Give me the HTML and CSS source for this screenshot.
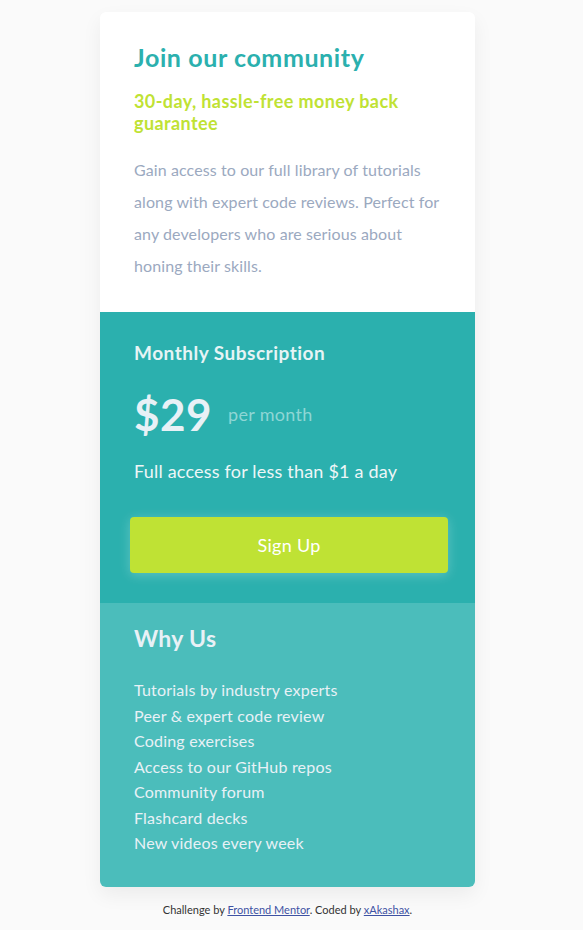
FILE: index.html
```html
<!DOCTYPE html>
<html lang="en">
<head>
<meta charset="utf-8">
<title>Single price grid</title>
<link rel="stylesheet" href="styles.css">
</head>
<body>
<div class="page">
  <main class="card">
    <section class="intro">
      <h1 class="intro-title">Join our community</h1>
      <h2 class="intro-sub">30-day, hassle-free money back guarantee</h2>
      <p class="intro-text">Gain access to our full library of tutorials along with expert code reviews. Perfect for any developers who are serious about honing their skills.</p>
    </section>
    <section class="sub">
      <h2 class="sub-title">Monthly Subscription</h2>
      <div class="price"><span class="amount">$29</span><span class="per">per month</span></div>
      <p class="sub-text">Full access for less than $1 a day</p>
      <button class="btn">Sign Up</button>
    </section>
    <section class="why">
      <h2 class="why-title">Why Us</h2>
      <ul class="why-list">
        <li>Tutorials by industry experts</li>
        <li>Peer &amp; expert code review</li>
        <li>Coding exercises</li>
        <li>Access to our GitHub repos</li>
        <li>Community forum</li>
        <li>Flashcard decks</li>
        <li>New videos every week</li>
      </ul>
    </section>
  </main>
  <footer class="attribution">Challenge by <a href="#">Frontend Mentor</a>. Coded by <a href="#">xAkashax</a>.</footer>
</div>
</body>
</html>
```
FILE: styles.css
```css
html, body { margin: 0; padding: 0; background: #fafafa; }
body { font-family: Lato, "Open Sans", sans-serif; }
.page { width: 575px; padding-top: 12px; display: flex; flex-direction: column; align-items: center; }
.card { width: 375px; border-radius: 6px; overflow: hidden; background: #fff; box-shadow: 0 8px 20px rgba(0,0,0,0.06); }
.intro { padding: 30px 34px 30px; }
.intro-title { margin: 0; font-size: 25px; font-weight: 700; color: #2bb0ae; line-height: 30px; letter-spacing: 0.6px; }
.intro-sub { margin: 18px 0 0; font-size: 18px; font-weight: 700; color: #bfe234; line-height: 22px; letter-spacing: 0.4px; }
.intro-text { margin: 20px 0 0; font-size: 16px; line-height: 32px; color: #9ba9bf; letter-spacing: 0.1px; }
.sub { background: #2bb0ae; padding: 29px 34px 30px; color: #fff; }
.sub-title { margin: 0; font-size: 19px; font-weight: 700; line-height: 24px; color: #e6f4f5; letter-spacing: 0.5px; }
.price { display: flex; align-items: center; gap: 16px; margin-top: 24px; }
.amount { font-size: 44px; font-weight: 700; color: #e8f1f6; line-height: 50px; letter-spacing: 0.5px; }
.per { font-size: 18px; color: #8fd6d5; letter-spacing: 0.3px; }
.sub-text { margin: 20px 0 0; font-size: 18px; line-height: 24px; color: #eef6f7; letter-spacing: 0.2px; }
.btn { display: block; margin: 34px -7px 0 -4px; width: 318px; height: 56px; border: 0; border-radius: 4px; background: #bfe234; color: #fff; font-family: inherit; font-size: 18px; letter-spacing: 0.3px; box-shadow: 0 2px 12px rgba(255,255,255,0.25); }
.why { background: #4bbdbb; padding: 20px 34px 31px; color: #e8f1f6; }
.why-title { margin: 0; font-size: 23px; font-weight: 700; line-height: 30px; letter-spacing: 0.3px; }
.why-list { list-style: none; margin: 24px 0 0; padding: 0; font-size: 16px; line-height: 25.5px; letter-spacing: 0.2px; }
.attribution { margin-top: 16px; font-size: 11px; color: #333; }
.attribution a { color: #3e52a3; }
```
